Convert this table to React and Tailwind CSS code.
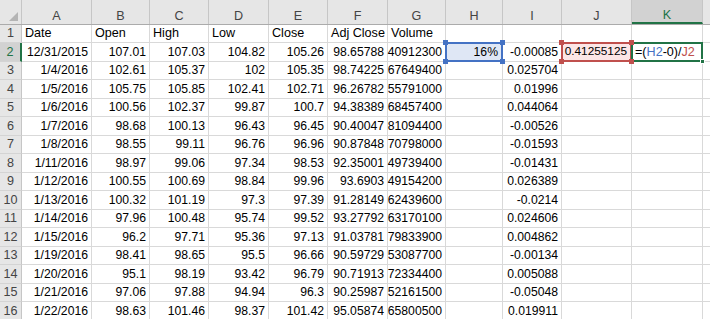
import React from "react";

const colW = ["w-[70px]", "w-[58px]", "w-[59px]", "w-[60px]", "w-[59px]", "w-[60px]", "w-[58px]", "w-[57px]", "w-[59px]", "w-[70px]", "w-[71px]"];
const letters = ["A", "B", "C", "D", "E", "F", "G", "H", "I", "J", "K"];

const data = [
  ["Date", "Open", "High", "Low", "Close", "Adj Close", "Volume", "", "", "", ""],
  ["12/31/2015", "107.01", "107.03", "104.82", "105.26", "98.65788", "40912300", "16%", "-0.00085", "0.41255125", "F"],
  ["1/4/2016", "102.61", "105.37", "102", "105.35", "98.74225", "67649400", "", "0.025704", "", ""],
  ["1/5/2016", "105.75", "105.85", "102.41", "102.71", "96.26782", "55791000", "", "0.01996", "", ""],
  ["1/6/2016", "100.56", "102.37", "99.87", "100.7", "94.38389", "68457400", "", "0.044064", "", ""],
  ["1/7/2016", "98.68", "100.13", "96.43", "96.45", "90.40047", "81094400", "", "-0.00526", "", ""],
  ["1/8/2016", "98.55", "99.11", "96.76", "96.96", "90.87848", "70798000", "", "-0.01593", "", ""],
  ["1/11/2016", "98.97", "99.06", "97.34", "98.53", "92.35001", "49739400", "", "-0.01431", "", ""],
  ["1/12/2016", "100.55", "100.69", "98.84", "99.96", "93.6903", "49154200", "", "0.026389", "", ""],
  ["1/13/2016", "100.32", "101.19", "97.3", "97.39", "91.28149", "62439600", "", "-0.0214", "", ""],
  ["1/14/2016", "97.96", "100.48", "95.74", "99.52", "93.27792", "63170100", "", "0.024606", "", ""],
  ["1/15/2016", "96.2", "97.71", "95.36", "97.13", "91.03781", "79833900", "", "0.004862", "", ""],
  ["1/19/2016", "98.41", "98.65", "95.5", "96.66", "90.59729", "53087700", "", "-0.00134", "", ""],
  ["1/20/2016", "95.1", "98.19", "93.42", "96.79", "90.71913", "72334400", "", "0.005088", "", ""],
  ["1/21/2016", "97.06", "97.88", "94.94", "96.3", "90.25987", "52161500", "", "-0.05048", "", ""],
  ["1/22/2016", "98.63", "101.46", "98.37", "101.42", "95.05874", "65800500", "", "0.019911", "", ""],
];

function Handle({ pos, color }) {
  return <span className={`absolute w-[5px] h-[5px] ${pos} ${color}`} />;
}

function Cell({ r, c, v }) {
  const base = `${colW[c]} shrink-0 relative h-full border-r border-b border-[#d9d9d9] flex items-center overflow-visible whitespace-nowrap`;
  if (r === 1 && c === 7) {
    return (
      <div className={`${base} justify-end pr-[4px] bg-[#dfe7f5] text-[12.2px]`}>
        <span className="relative z-10">{v}</span>
        <div className="absolute left-[-1px] top-[-1px] right-[-1px] bottom-[-1px] border-2 border-[#4472c4] z-20" />
        <Handle pos="left-[-3px] top-[-3px] z-30" color="bg-[#4472c4]" />
        <Handle pos="right-[-3px] top-[-3px] z-30" color="bg-[#4472c4]" />
        <Handle pos="left-[-3px] bottom-[-3px] z-30" color="bg-[#4472c4]" />
        <Handle pos="right-[-3px] bottom-[-3px] z-30" color="bg-[#4472c4]" />
      </div>
    );
  }
  if (r === 1 && c === 9) {
    return (
      <div className={`${base} justify-end pr-[4px] bg-[#fce6e6] text-[11.8px]`}>
        <span className="relative z-10">{v}</span>
        <div className="absolute left-[-1px] top-[-1px] right-[-1px] bottom-[-1px] border-2 border-[#c0504d] z-20" />
        <Handle pos="left-[-3px] top-[-3px] z-30" color="bg-[#c0504d]" />
        <Handle pos="right-[-3px] top-[-3px] z-30" color="bg-[#c0504d]" />
        <Handle pos="left-[-3px] bottom-[-3px] z-30" color="bg-[#c0504d]" />
        <Handle pos="right-[-3px] bottom-[-3px] z-30" color="bg-[#c0504d]" />
      </div>
    );
  }
  if (r === 1 && c === 10) {
    return (
      <div className={`${base} justify-start pl-[3px] bg-white text-[12.6px]`}>
        <span className="relative z-10">
          =(<span className="text-[#4472c4]">H2</span>-0)/<span className="text-[#c0504d]">J2</span>
        </span>
        <div className="absolute left-[-1px] top-[-1px] right-[-1px] bottom-[-1px] border-2 border-[#217346] z-20" />
        <Handle pos="right-[-3px] bottom-[-3px] z-30 border border-white" color="bg-[#217346]" />
      </div>
    );
  }
  const left = r === 0;
  return (
    <div className={`${base} ${left ? "justify-start pl-[3px] text-[12.6px]" : "justify-end pr-[3px] text-[12.2px]"}`}>
      {v}
    </div>
  );
}

export default function App() {
  return (
    <div className="w-[710px] h-[319px] overflow-hidden bg-white text-black text-[12.6px] leading-none" style={{ fontFamily: '"Liberation Sans", Arial, sans-serif' }}>
      <div className="flex h-[25px] bg-[#e6e6e6] border-b border-[#ababab]">
        <div className="w-[22px] shrink-0 h-full relative border-r border-[#c6c6c6]">
          <svg className="absolute left-[9px] top-[12px]" width="9" height="9" viewBox="0 0 9 9">
            <polygon points="9,0 9,9 0,9" fill="#b4b4b4" />
          </svg>
        </div>
        {letters.map((l, i) => (
          <div
            key={l}
            className={`${colW[i]} shrink-0 h-full flex items-center justify-center pt-[9px] border-r border-[#c6c6c6] ${
              i === 10 ? "bg-[#d2d2d2] text-[#217346] border-b-2 border-b-[#217346]" : "text-[#444]"
            }`}
          >
            {l}
          </div>
        ))}
        <div className="flex-1 h-full" />
      </div>
      {data.map((row, r) => (
        <div key={r} className={`flex ${r % 2 === 0 ? "h-[18px]" : "h-[19px]"}`}>
          <div
            className={`w-[22px] shrink-0 h-full flex items-center justify-center border-b border-[#d4d4d4] ${
              r === 1 ? "bg-[#d2d2d2] text-[#217346] border-r-2 border-r-[#217346]" : "bg-[#e6e6e6] text-[#444] border-r border-r-[#c6c6c6]"
            }`}
          >
            {r + 1}
          </div>
          {row.map((v, c) => (
            <Cell key={c} r={r} c={c} v={v} />
          ))}
          <div className="flex-1 h-full border-b border-[#d9d9d9]" />
        </div>
      ))}
    </div>
  );
}
